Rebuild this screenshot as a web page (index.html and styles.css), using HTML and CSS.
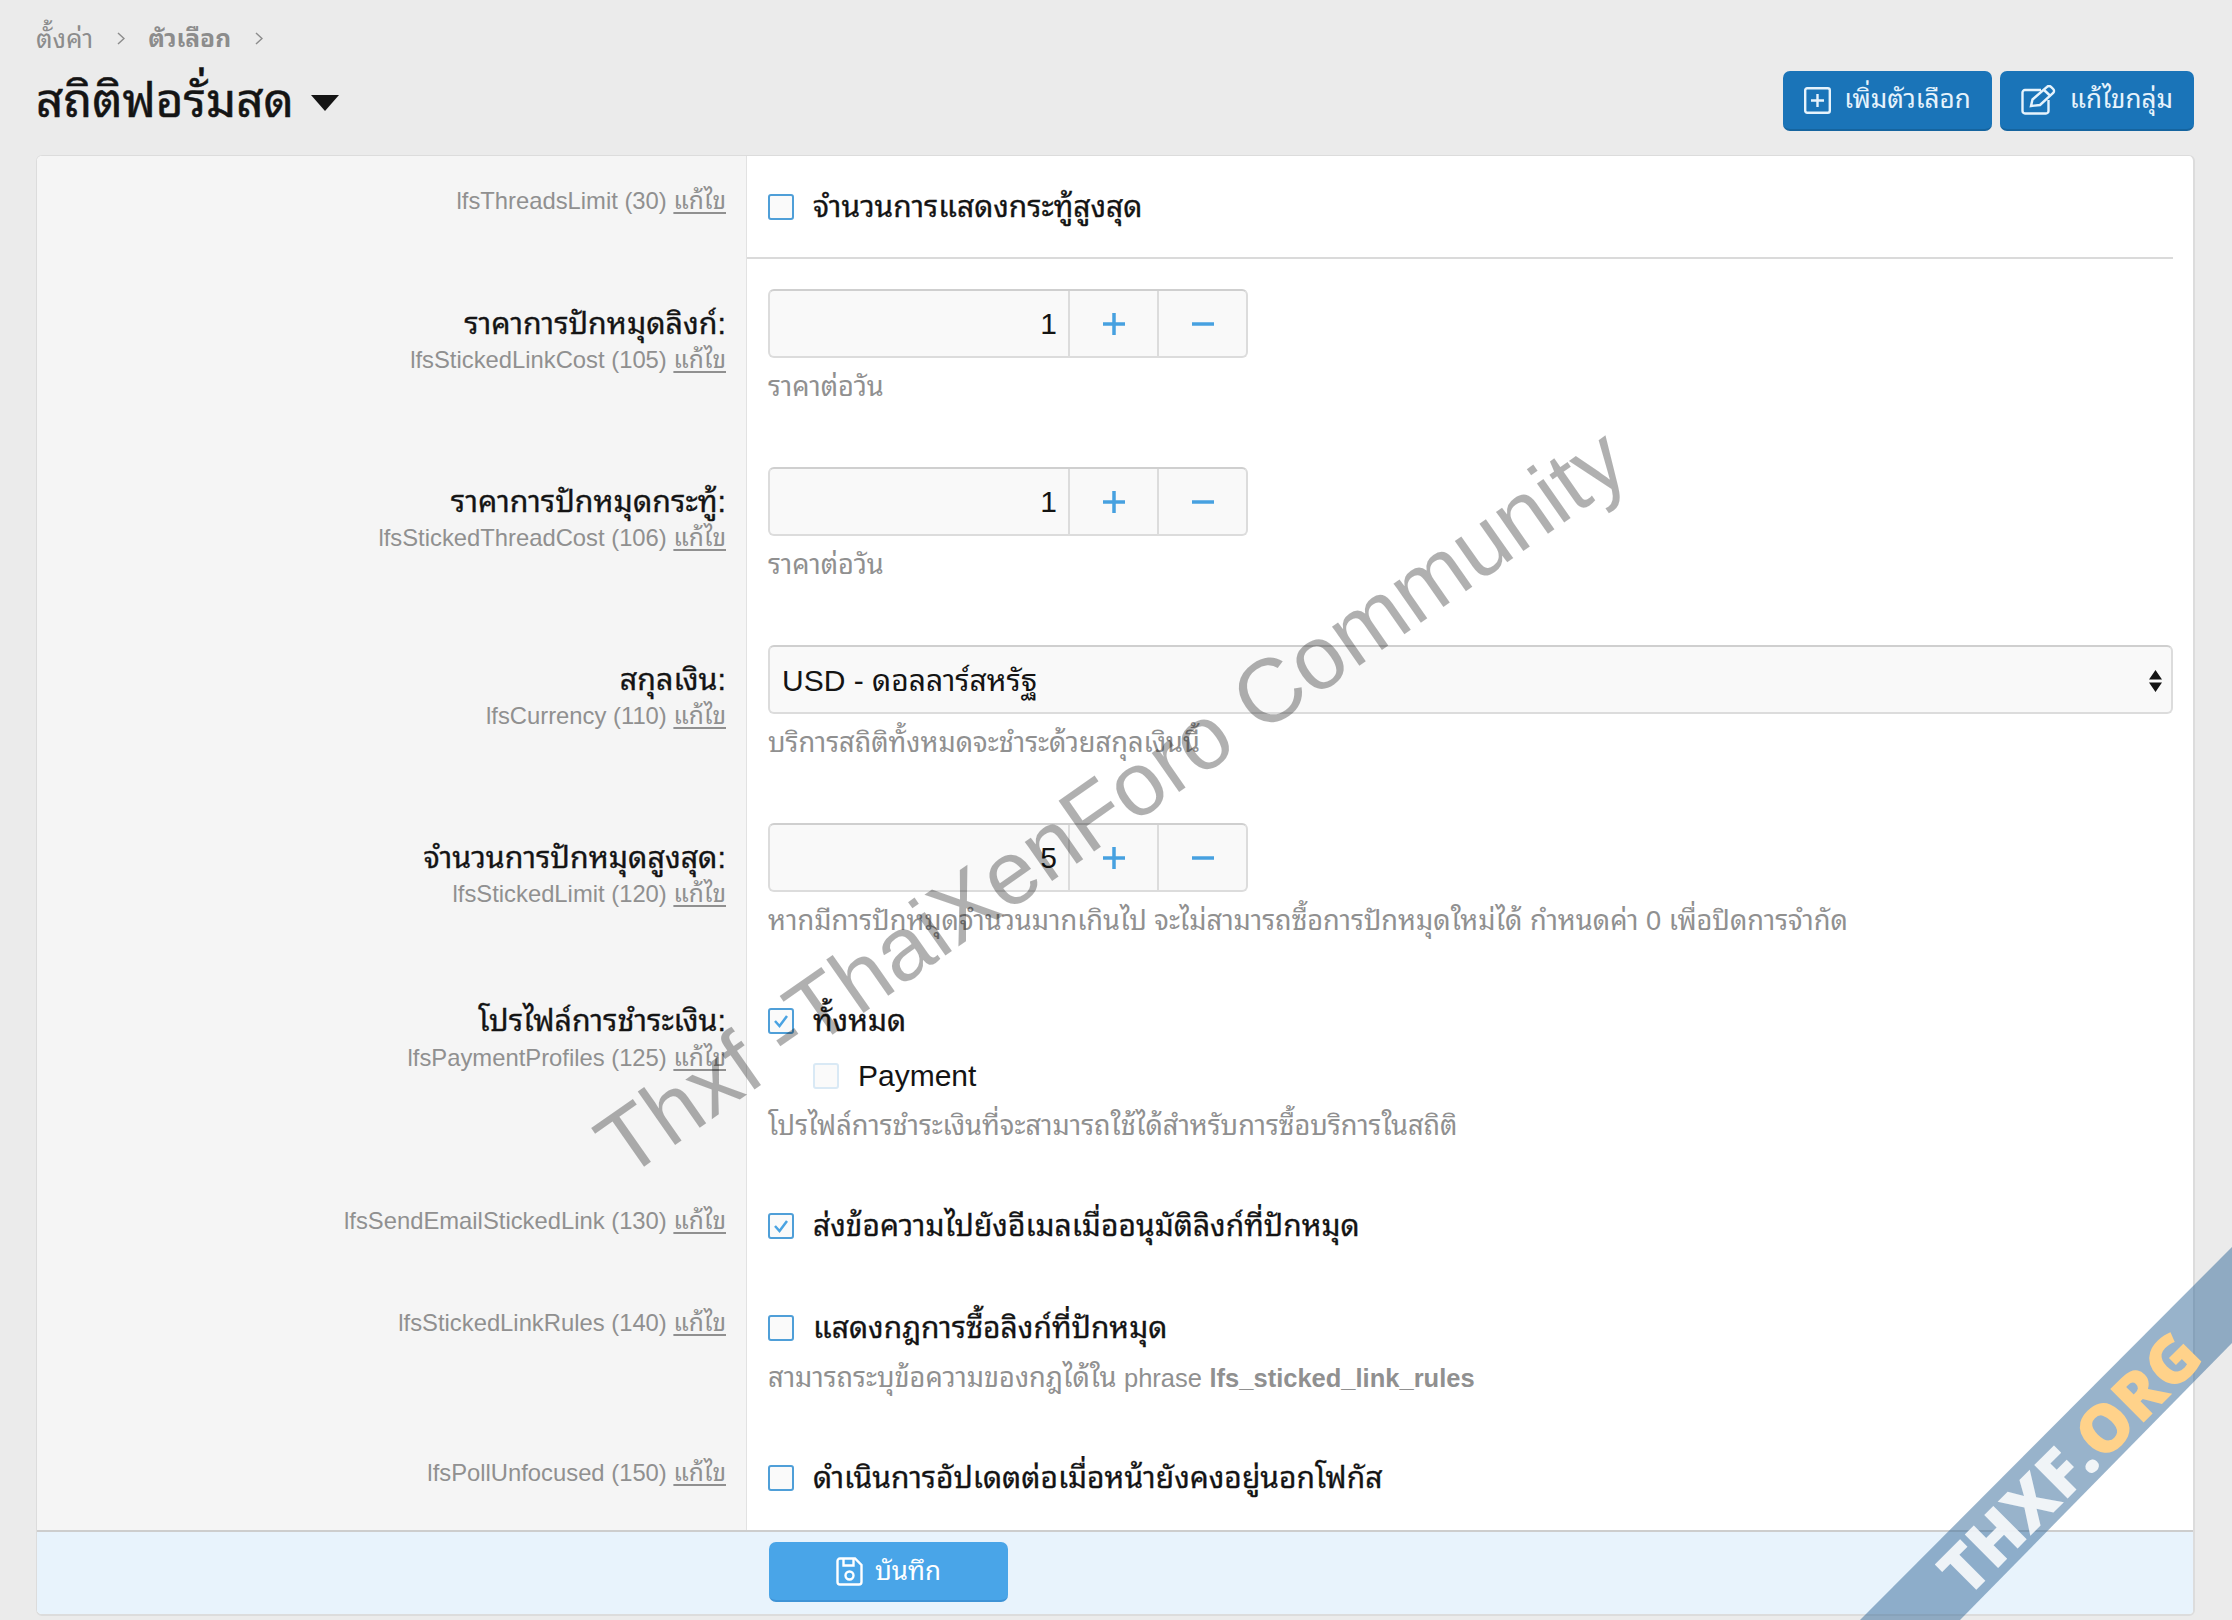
FILE: index.html
```html
<!DOCTYPE html>
<html lang="th">
<head>
<meta charset="UTF-8">
<title>สถิติฟอรั่มสด</title>
<link rel="stylesheet" href="styles.css">
</head>
<body>
<div class="page">
  <div class="crumbs">
    <span>ตั้งค่า</span>
    <svg class="chev" viewBox="0 0 8 13"><path d="M1 1l6 5.500-6 5.500"/></svg>
    <span class="crumb-bold">ตัวเลือก</span>
    <svg class="chev" viewBox="0 0 8 13"><path d="M1 1l6 5.500-6 5.500"/></svg>
  </div>
  <div class="head">
    <h1>สถิติฟอรั่มสด<span class="caret"></span></h1>
    <div class="actions">
      <a class="btn">
        <svg class="ico" viewBox="0 0 27 27"><rect x="1.200" y="1.200" width="24.600" height="24.600" rx="2"/><path d="M13.500 7v13M7 13.500h13"/></svg>
        <span class="btn-text">เพิ่มตัวเลือก</span>
      </a>
      <a class="btn">
        <svg class="ico ico-edit" viewBox="0 0 36 30"><path d="M20 5H4a2.500 2.500 0 0 0-2.500 2.500v18.500A2.500 2.500 0 0 0 4 28.500h21a2.500 2.500 0 0 0 2.500-2.500V15"/><path d="M10 21l1.500-6.500L26 1.800a2.800 2.800 0 0 1 4 0l2.200 2.200a2.800 2.800 0 0 1 0 4L19 20z"/><path d="M23 5l6.500 6"/></svg>
        <span class="btn-text">แก้ไขกลุ่ม</span>
      </a>
    </div>
  </div>

  <div class="panel">
    <div class="row row-first">
      <div class="label"><div class="meta">lfsThreadsLimit (30) <u>แก้ไข</u></div></div>
      <div class="body body-rule">
        <div class="check"><span class="box"></span>จำนวนการแสดงกระทู้สูงสุด</div>
      </div>
    </div>

    <div class="row">
      <div class="label label-title"><div class="title">ราคาการปักหมุดลิงก์:</div><div class="meta">lfsStickedLinkCost (105) <u>แก้ไข</u></div></div>
      <div class="body">
        <div class="num">
          <input class="num-val" type="text" value="1">
          <span class="num-btn"><svg viewBox="0 0 22 22"><path d="M11 0v22M0 11h22"/></svg></span>
          <span class="num-btn"><svg viewBox="0 0 22 22"><path d="M0 11h22"/></svg></span>
        </div>
        <div class="hint hint-input">ราคาต่อวัน</div>
      </div>
    </div>

    <div class="row">
      <div class="label label-title"><div class="title">ราคาการปักหมุดกระทู้:</div><div class="meta">lfsStickedThreadCost (106) <u>แก้ไข</u></div></div>
      <div class="body">
        <div class="num">
          <input class="num-val" type="text" value="1">
          <span class="num-btn"><svg viewBox="0 0 22 22"><path d="M11 0v22M0 11h22"/></svg></span>
          <span class="num-btn"><svg viewBox="0 0 22 22"><path d="M0 11h22"/></svg></span>
        </div>
        <div class="hint hint-input">ราคาต่อวัน</div>
      </div>
    </div>

    <div class="row">
      <div class="label label-title"><div class="title">สกุลเงิน:</div><div class="meta">lfsCurrency (110) <u>แก้ไข</u></div></div>
      <div class="body">
        <div class="select">USD - ดอลลาร์สหรัฐ
          <svg class="updown" viewBox="0 0 13 22"><path d="M6.500 0L13 9.500H0zM6.500 22L0 12.500h13z"/></svg>
        </div>
        <div class="hint hint-input">บริการสถิติทั้งหมดจะชำระด้วยสกุลเงินนี้</div>
      </div>
    </div>

    <div class="row">
      <div class="label label-title"><div class="title">จำนวนการปักหมุดสูงสุด:</div><div class="meta">lfsStickedLimit (120) <u>แก้ไข</u></div></div>
      <div class="body">
        <div class="num">
          <input class="num-val" type="text" value="5">
          <span class="num-btn"><svg viewBox="0 0 22 22"><path d="M11 0v22M0 11h22"/></svg></span>
          <span class="num-btn"><svg viewBox="0 0 22 22"><path d="M0 11h22"/></svg></span>
        </div>
        <div class="hint hint-input">หากมีการปักหมุดจำนวนมากเกินไป จะไม่สามารถซื้อการปักหมุดใหม่ได้ กำหนดค่า 0 เพื่อปิดการจำกัด</div>
      </div>
    </div>

    <div class="row">
      <div class="label label-check"><div class="title">โปรไฟล์การชำระเงิน:</div><div class="meta">lfsPaymentProfiles (125) <u>แก้ไข</u></div></div>
      <div class="body">
        <div class="check"><span class="box box-on"><svg viewBox="0 0 22 22"><path d="M5 11l4.500 5 7.500-10"/></svg></span>ทั้งหมด</div>
        <div class="check check-sub"><span class="box box-off"></span>Payment</div>
        <div class="hint">โปรไฟล์การชำระเงินที่จะสามารถใช้ได้สำหรับการซื้อบริการในสถิติ</div>
      </div>
    </div>

    <div class="row">
      <div class="label"><div class="meta">lfsSendEmailStickedLink (130) <u>แก้ไข</u></div></div>
      <div class="body">
        <div class="check"><span class="box box-on"><svg viewBox="0 0 22 22"><path d="M5 11l4.500 5 7.500-10"/></svg></span>ส่งข้อความไปยังอีเมลเมื่ออนุมัติลิงก์ที่ปักหมุด</div>
      </div>
    </div>

    <div class="row">
      <div class="label"><div class="meta">lfsStickedLinkRules (140) <u>แก้ไข</u></div></div>
      <div class="body">
        <div class="check"><span class="box"></span>แสดงกฎการซื้อลิงก์ที่ปักหมุด</div>
        <div class="hint">สามารถระบุข้อความของกฎได้ใน <span class="latin">phrase</span> <b>lfs_sticked_link_rules</b></div>
      </div>
    </div>

    <div class="row">
      <div class="label"><div class="meta">lfsPollUnfocused (150) <u>แก้ไข</u></div></div>
      <div class="body">
        <div class="check"><span class="box"></span>ดำเนินการอัปเดตต่อเมื่อหน้ายังคงอยู่นอกโฟกัส</div>
      </div>
    </div>

    <div class="foot">
      <a class="save">
        <svg class="ico-save" viewBox="0 0 27 29"><path d="M4 1.500h15l6.500 6.500v17a2.500 2.500 0 0 1-2.500 2.500H4A2.500 2.500 0 0 1 1.500 25V4A2.500 2.500 0 0 1 4 1.500z"/><path d="M7.500 1.500v7h10v-7"/><circle cx="13.500" cy="18.500" r="4"/></svg>
        <span class="save-text">บันทึก</span>
      </a>
    </div>
  </div>
</div>

<svg class="overlay" viewBox="0 0 2232 1620">
  <text class="mark" transform="translate(625 1180) rotate(-35)">Thxf -ThaiXenForo Community</text>
  <polygon class="ribbon" points="1860,1620 2232,1247 2232,1343 1960,1620"/>
  <text class="ribbon-text" transform="translate(1967 1599) rotate(-45)">THXF.<tspan class="ribbon-org">ORG</tspan></text>
</svg>
</body>
</html>
```

FILE: styles.css
```css
* { box-sizing: border-box; }
html, body { margin: 0; height: 100%; }
body { background: #ebebeb; color: #141414; font-family: "Liberation Sans", "Noto Sans Thai Looped", "Noto Sans Thai", "Noto Sans", sans-serif; font-size: 30px; overflow: hidden; }
.page { padding: 18px 37px 0 36px; }

/* header */
.crumbs { display: flex; align-items: center; height: 36px; font-size: 26px; color: #8c8c8c; }
.crumbs .crumb-bold { font-size: 24.500px; font-weight: bold; }
.chev { width: 8px; height: 13px; margin: 4px 23px 0 24px; fill: none; stroke: #8c8c8c; stroke-width: 1.500; }
.head { display: flex; justify-content: space-between; align-items: flex-start; height: 101px; padding-top: 17px; }
.head h1 { margin: 0; font-size: 47.500px; font-weight: normal; line-height: 60px; display: flex; align-items: center; -webkit-text-stroke: .5px #141414; }
.caret { width: 0; height: 0; margin: 4px 0 0 17px; border-left: 14px solid transparent; border-right: 14px solid transparent; border-top: 16px solid #141414; }
.actions { display: flex; gap: 8px; margin: 0 1px 0 0; }
.btn { display: flex; align-items: center; gap: 13px; height: 60px; padding: 0 21px; background: #1a74b8; border-bottom: 2px solid #15649f; border-radius: 7px; color: #e6f3fc; font-size: 26px; }
.btn-text { padding-bottom: 8px; }
.ico { width: 27px; height: 27px; fill: none; stroke: #e6f3fc; stroke-width: 2.400; }
.ico-edit { width: 36px; height: 30px; }

/* panel */
.panel { background: #fff; border: 1px solid #dcdcdc; border-right-width: 2px; border-bottom-width: 2px; border-radius: 6px; overflow: hidden; }
.row { display: grid; grid-template-columns: 710px 1fr; }
.label { background: #f5f5f5; border-right: 1px solid #e2e2e2; padding: 27px 20px 0 0; text-align: right; }
.label-title { padding-top: 46px; }
.label-check { padding-top: 30px; }
.label-check .title { line-height: 39px; }
.title { font-size: 30.400px; line-height: 37px; -webkit-text-stroke: .3px #141414; }
.meta { font-size: 23.800px; line-height: 36px; color: #909090; }
.meta u { font-size: 24.500px; text-underline-offset: 3px; }

.body { margin-right: 20px; padding: 30px 0 32px 21px; }
.row-first .body { padding-top: 31px; padding-bottom: 30px; }
.body-rule { border-bottom: 2px solid #dadada; }

.check { display: flex; align-items: center; height: 40px; padding-bottom: 8px; font-size: 30px; -webkit-text-stroke: .3px #141414; }
.check-sub { margin: 15px 0 0 45px; padding-bottom: 0; -webkit-text-stroke: 0; }
.box { flex: none; display: block; width: 26px; height: 26px; margin: 8px 19px 0 0; background: #fafafa; border: 2px solid #4f9fd8; border-radius: 3px; }
.check-sub .box { margin-top: 0; }
.box svg { display: block; width: 22px; height: 22px; fill: none; stroke: #4aa3e2; stroke-width: 2.500; }
.box-off { border-color: #d9e9f5; }

.hint { margin-top: 12px; font-size: 27.200px; line-height: 36px; color: #909090; }
.hint-input { margin-top: 11px; }
.hint .latin { font-size: 25.500px; }
.hint b { font-size: 25.500px; }

.num { display: flex; width: 480px; height: 69px; background: #f9f9f9; border: 2px solid #dcdcdc; border-top-color: #cfcfcf; border-radius: 6px; }
.num-val { width: 298px; height: 100%; padding: 0 11px 0 0; border: 0; background: none; color: #141414; font: inherit; text-align: right; }
.num-btn { flex: 0 0 89px; display: flex; align-items: center; justify-content: center; border-left: 2px solid #dcdcdc; }
.num-btn:last-child { flex: 1; }
.num-btn svg { width: 22px; height: 22px; fill: none; stroke: #47a1e0; stroke-width: 3.500; }
.select { position: relative; display: flex; align-items: center; height: 69px; padding: 0 0 5px 12px; font-size: 30px; background: #f9f9f9; border: 2px solid #dcdcdc; border-top-color: #cfcfcf; border-radius: 6px; }
.updown { position: absolute; right: 9px; top: 23px; width: 13px; height: 22px; fill: #141414; }

.foot { height: 84px; padding: 10px 0 0 732px; background: #e8f3fc; border-top: 2px solid #cdcdcd; }
.save { display: flex; align-items: center; justify-content: center; gap: 12px; width: 239px; height: 60px; background: #49a5e8; border-bottom: 2px solid #3e93d6; border-radius: 7px; color: #fff; font-size: 26px; }
.save-text { padding-bottom: 6px; }
.ico-save { width: 27px; height: 29px; fill: none; stroke: #fff; stroke-width: 2.400; }

/* watermark and corner ribbon, both lie over the page */
.overlay { position: absolute; left: 0; top: 0; width: 2232px; height: 1620px; pointer-events: none; }
.mark { font-family: "Liberation Sans", sans-serif; font-size: 90px; fill: #000; fill-opacity: .31; }
.ribbon { fill: #3d6f9d; fill-opacity: .53; }
.ribbon-text { font-family: "Open Sans", "Liberation Sans", sans-serif; font-weight: 800; font-size: 66px; fill: #fff; fill-opacity: .85; }
.ribbon-org { fill: #ffd28a; fill-opacity: 1; }
```
